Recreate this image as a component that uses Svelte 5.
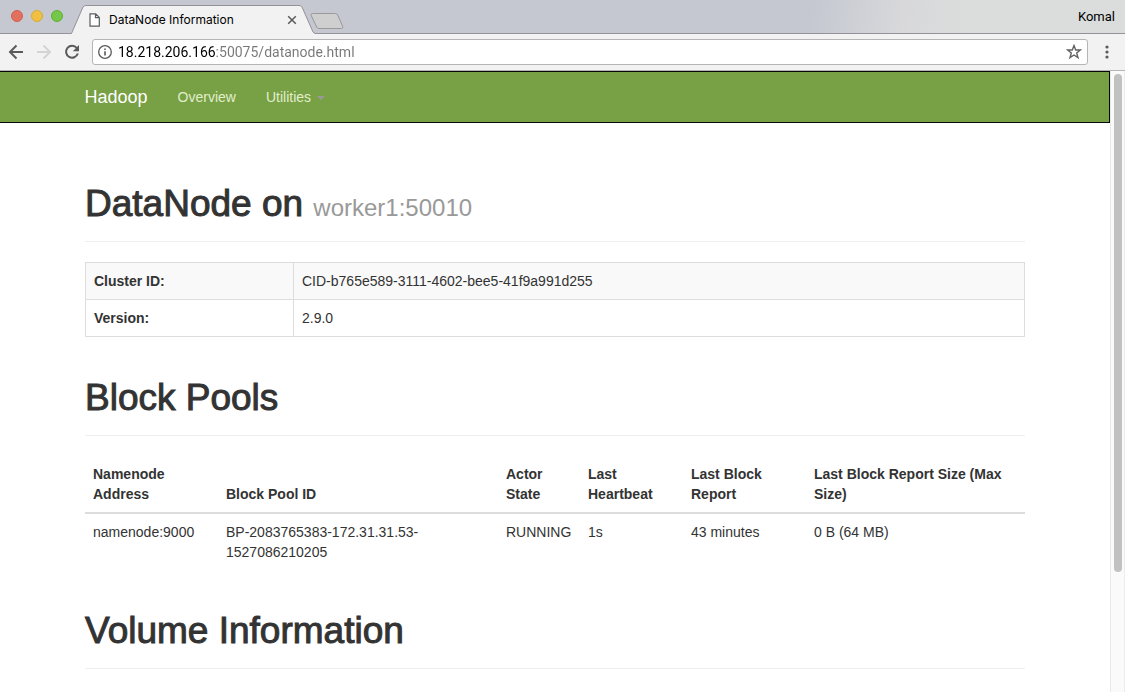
<script>
  const summary = [
    { label: 'Cluster ID:', value: 'CID-b765e589-3111-4602-bee5-41f9a991d255' },
    { label: 'Version:', value: '2.9.0' }
  ];

  const columns = [
    { title: 'Namenode Address', key: 'address' },
    { title: 'Block Pool ID', key: 'pool' },
    { title: 'Actor State', key: 'state' },
    { title: 'Last Heartbeat', key: 'heartbeat' },
    { title: 'Last Block Report', key: 'report' },
    { title: 'Last Block Report Size (Max Size)', key: 'size' }
  ];

  const pools = [
    {
      address: 'namenode:9000',
      pool: 'BP-2083765383-172.31.31.53-1527086210205',
      state: 'RUNNING',
      heartbeat: '1s',
      report: '43 minutes',
      size: '0 B (64 MB)'
    }
  ];

  let address = $state('18.218.206.166:50075/datanode.html');
</script>

<div class="browser">
  <header class="tabstrip">
    <div class="lights">
      <button class="light close" aria-label="Close window"></button>
      <button class="light minimize" aria-label="Minimize window"></button>
      <button class="light zoom" aria-label="Zoom window"></button>
    </div>
    <div class="tab">
      <svg class="tab-shape" viewBox="0 0 246 29" preserveAspectRatio="none" aria-hidden="true">
        <path d="M0 29V28.500H1.500L13 2Q14 .5 16 .5H229Q231 .5 232 2L243 27Q244 28.500 246 28.500V29Z" fill="#f2f2f2" />
        <path d="M0 28.500H1.500L13 2Q14 .5 16 .5H229Q231 .5 232 2L243 27Q244 28.500 246 28.500" fill="none" stroke="#929298" />
      </svg>
      <svg class="tab-icon" width="12" height="14" viewBox="0 0 12 14" aria-hidden="true">
        <path d="M1 .8H6.700L10.300 4.400V13.200H1ZM6.500 .8V4.700H10.300" fill="#fff" stroke="#5c5c5c" stroke-width="1.200" />
      </svg>
      <span class="tab-title">DataNode Information</span>
      <button class="tab-close" aria-label="Close tab">
        <svg width="10" height="10" viewBox="0 0 10 10"><path d="M1.200 1.200L8.800 8.800M8.800 1.200L1.200 8.800" stroke="#5a5a5a" stroke-width="1.500" /></svg>
      </button>
    </div>
    <button class="new-tab" aria-label="New tab">
      <svg width="34" height="18" viewBox="0 0 34 18"><path d="M2.500 1.500H25.500Q27 1.500 27.700 3L32.700 14.500Q33.300 16.500 31.500 16.500H9Q7.500 16.500 6.700 15L1.200 3.500Q.5 1.500 2.500 1.500Z" fill="#cfcfcf" stroke="#98989d" /></svg>
    </button>
    <button class="profile">Komal</button>
  </header>

  <div class="toolbar">
    <button class="tool" aria-label="Back">
      <svg width="16" height="16" viewBox="0 0 16 16"><path d="M15 8H2.500M8.500 1.500L2 8L8.500 14.500" fill="none" stroke="#5a5a5a" stroke-width="2" /></svg>
    </button>
    <button class="tool" aria-label="Forward" disabled>
      <svg width="16" height="16" viewBox="0 0 16 16"><path d="M1 8H13.500M7.500 1.500L14 8L7.500 14.500" fill="none" stroke="#d4d4d4" stroke-width="2" /></svg>
    </button>
    <button class="tool" aria-label="Reload">
      <svg width="16" height="16" viewBox="0 0 16 16"><path d="M12.800 4A6 6 0 1 0 13.800 9.500" fill="none" stroke="#5a5a5a" stroke-width="2" /><path d="M15 1V7.200H8.800Z" fill="#5a5a5a" /></svg>
    </button>
    <div class="omnibox">
      <svg width="14" height="14" viewBox="0 0 14 14" aria-hidden="true"><circle cx="7" cy="7" r="6.300" fill="none" stroke="#5a5a5a" stroke-width="1.300" /><path d="M7 6.200V10.500M7 3.400V5" stroke="#5a5a5a" stroke-width="1.600" /></svg>
      <input type="text" aria-label="Address" spellcheck="false" bind:value={address} />
      <button class="star" aria-label="Bookmark this page">
        <svg width="16" height="16" viewBox="0 0 16 16"><path d="M8 1.600L9.700 6H14.300L10.700 8.900L12 13.700L8 11L4 13.700L5.300 8.900L1.700 6H6.300Z" fill="none" stroke="#626262" stroke-width="1.400" /></svg>
      </button>
    </div>
    <button class="menu" aria-label="Menu">
      <svg width="4" height="14" viewBox="0 0 4 14"><g fill="#5a5a5a"><circle cx="2" cy="2" r="1.600" /><circle cx="2" cy="7" r="1.600" /><circle cx="2" cy="12" r="1.600" /></g></svg>
    </button>
  </div>

  <div class="viewport">
    <div class="page">
      <nav class="navbar">
        <div class="container links">
          <a class="brand" href="#hadoop">Hadoop</a>
          <a href="#overview">Overview</a>
          <a href="#utilities">Utilities <span class="caret"></span></a>
        </div>
      </nav>

      <main class="container">
        <h1>DataNode on <small>worker1:50010</small></h1>
        <table class="summary">
          <colgroup><col class="label-col" /><col /></colgroup>
          <tbody>
            {#each summary as row}
              <tr><th scope="row">{row.label}</th><td>{row.value}</td></tr>
            {/each}
          </tbody>
        </table>

        <h1>Block Pools</h1>
        <table class="pools">
          <colgroup>
            {#each columns as column}<col class={column.key} />{/each}
          </colgroup>
          <thead>
            <tr>{#each columns as column}<th scope="col">{column.title}</th>{/each}</tr>
          </thead>
          <tbody>
            {#each pools as pool}
              <tr>{#each columns as column}<td>{pool[column.key]}</td>{/each}</tr>
            {/each}
          </tbody>
        </table>

        <h1>Volume Information</h1>
      </main>
    </div>
    <div class="scrollbar"><div class="thumb"></div></div>
  </div>
</div>

<style>
  :global(body) {
    margin: 0;
    background: #fff;
  }

  .browser {
    display: flex;
    flex-direction: column;
    height: 100vh;
    overflow: hidden;
    box-sizing: border-box;
    font-family: "Liberation Sans", Arial, sans-serif;
    font-size: 14px;
    line-height: 20px;
    color: #333;
  }

  button {
    display: flex;
    align-items: center;
    justify-content: center;
    padding: 0;
    border: 0;
    background: none;
    font: inherit;
    color: inherit;
  }

  .tabstrip {
    flex: none;
    display: flex;
    align-items: flex-end;
    height: 34px;
    box-sizing: border-box;
    background: linear-gradient(#929298, #929298) bottom / 100% 1px no-repeat,
      linear-gradient(100deg, #c5c8d1 72%, #d8d8db 80%, #dbdddc 86%, #dbdddc);
    font-family: Roboto, sans-serif;
  }

  .lights {
    display: flex;
    gap: 8px;
    align-self: flex-start;
    padding: 10px 7px 0 11px;
  }

  .light {
    width: 12px;
    height: 12px;
    border: 1px solid;
    border-radius: 50%;
  }

  .close {
    background: #e2705f;
    border-color: #d0604f;
  }

  .minimize {
    background: #efc043;
    border-color: #d9aa36;
  }

  .zoom {
    background: #74c748;
    border-color: #5eb035;
  }

  .tab {
    position: relative;
    display: flex;
    align-items: center;
    width: 246px;
    height: 29px;
    box-sizing: border-box;
    padding: 0 19px;
  }

  .tab-shape {
    position: absolute;
    inset: 0;
    width: 100%;
    height: 100%;
  }

  .tab-icon,
  .tab-title,
  .tab-close {
    position: relative;
  }

  .tab-title {
    flex: 1;
    padding-left: 8px;
    font-family: Inter, sans-serif;
    font-size: 12px;
    color: #000;
  }

  .new-tab {
    align-self: flex-start;
    padding-top: 12px;
    margin-left: -6px;
  }

  .profile {
    align-self: center;
    margin-left: auto;
    padding-right: 10px;
    font-size: 13px;
    color: #000;
  }

  .toolbar {
    flex: none;
    display: flex;
    align-items: center;
    gap: 12px;
    height: 37px;
    box-sizing: border-box;
    padding: 0 16px 0 8px;
    border-bottom: 1px solid #b5b5b5;
    background: #f2f2f2;
  }

  .omnibox {
    flex: 1;
    display: flex;
    align-items: center;
    gap: 6px;
    height: 26px;
    box-sizing: border-box;
    padding: 0 5px;
    border: 1px solid #b5b5b5;
    border-radius: 3px;
    background: #fff;
  }

  .omnibox input {
    flex: 1;
    min-width: 0;
    padding: 0;
    border: 0;
    outline: 0;
    background: linear-gradient(90deg, #000 98px, #777 98px);
    background-clip: text;
    color: transparent;
    font: 14px/20px Roboto, sans-serif;
  }

  .menu {
    margin-left: 5px;
  }

  .viewport {
    flex: 1;
    display: flex;
    min-height: 0;
  }

  .page {
    flex: 1;
    overflow: hidden;
  }

  .navbar {
    border: 1px solid #080808;
    border-left: 0;
    background: #78a044;
  }

  .container {
    width: 85%;
    max-width: 940px;
    margin: 0 auto;
  }

  .links {
    display: flex;
    align-items: center;
    gap: 30px;
    height: 50px;
  }

  .links a {
    color: #e0efcc;
    text-decoration: none;
  }

  .links .brand {
    font-size: 18px;
    color: #fff;
  }

  .caret {
    display: inline-block;
    margin-left: 2px;
    vertical-align: middle;
    border-top: 4px solid #999;
    border-right: 4px solid transparent;
    border-left: 4px solid transparent;
  }

  main {
    padding-top: 20px;
  }

  h1 {
    margin: 41px 0 20px;
    padding-bottom: 18px;
    border-bottom: 1px solid #eee;
    font-size: 37px;
    font-weight: 400;
    line-height: 39px;
    -webkit-text-stroke: 1px #333;
  }

  h1 small {
    font-size: 24px;
    line-height: 1;
    color: #999;
    -webkit-text-stroke: 0;
  }

  table {
    width: 100%;
    border-collapse: collapse;
    table-layout: fixed;
  }

  th,
  td {
    padding: 8px;
    text-align: left;
    vertical-align: top;
  }

  .summary th,
  .summary td {
    border: 1px solid #ddd;
  }

  .summary tr:first-child {
    background: #f9f9f9;
  }

  .label-col {
    width: 208px;
  }

  .pools thead th {
    vertical-align: bottom;
    border-bottom: 2px solid #ddd;
  }

  .address {
    width: 133px;
  }

  .pool {
    width: 280px;
  }

  .state {
    width: 82px;
  }

  .heartbeat {
    width: 103px;
  }

  .report {
    width: 123px;
  }

  .scrollbar {
    flex: none;
    width: 15px;
    box-sizing: border-box;
    padding: 3px 2px 3px 3px;
    border-left: 1px solid #e8e8e8;
    border-right: 1px solid #ededed;
    background: #fafafa;
  }

  .thumb {
    height: 81%;
    border-radius: 4px;
    background: #c1c1c1;
  }
</style>
